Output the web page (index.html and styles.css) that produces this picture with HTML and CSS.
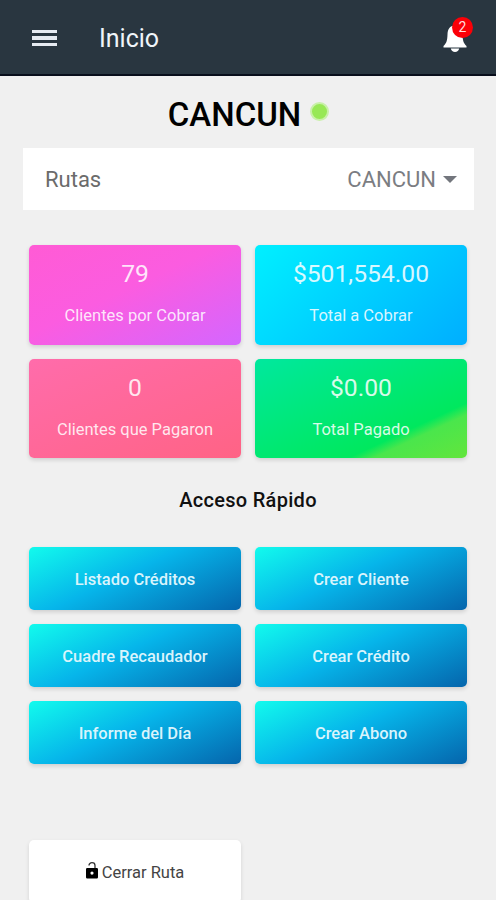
FILE: index.html
```html
<!DOCTYPE html>
<html lang="es">

<head>
    <meta charset="UTF-8">
    <meta name="viewport" content="width=device-width, initial-scale=1.0">
    <title>Inicio</title>
    <link rel="stylesheet" href="styles.css">
</head>

<body>
    <header class="toolbar">
        <div class="menu-btn">
            <span></span>
            <span></span>
            <span></span>
        </div>
        <div class="toolbar-title">Inicio</div>
        <div class="notifications">
            <svg class="bell" viewBox="0 0 24 27">
                <path d="M12 0C6.500 0 4.700 4 4.500 9C4.300 15 3.500 17.500 0.500 20.500V22H23.500V20.500C20.500 17.500 19.700 15 19.500 9C19.300 4 17.500 0 12 0Z" />
                <path d="M7.800 23H16.200C15.700 25.300 14.200 26.500 12 26.500C9.800 26.500 8.300 25.300 7.800 23Z" />
            </svg>
            <span class="badge">2</span>
        </div>
    </header>

    <main class="content">
        <h1 class="city">CANCUN <span class="status"></span></h1>

        <div class="route-select">
            <span>Rutas</span>
            <span class="route-value">CANCUN <i class="arrow"></i></span>
        </div>

        <div class="grid">
            <div class="card pink">
                <div class="amount">79</div>
                <div class="label">Clientes por Cobrar</div>
            </div>
            <div class="card blue">
                <div class="amount">$501,554.00</div>
                <div class="label">Total a Cobrar</div>
            </div>
            <div class="card coral">
                <div class="amount">0</div>
                <div class="label">Clientes que Pagaron</div>
            </div>
            <div class="card green">
                <div class="amount">$0.00</div>
                <div class="label">Total Pagado</div>
            </div>
        </div>

        <h2 class="section-title">Acceso Rápido</h2>

        <div class="grid">
            <button class="action">Listado Créditos</button>
            <button class="action">Crear Cliente</button>
            <button class="action">Cuadre Recaudador</button>
            <button class="action">Crear Crédito</button>
            <button class="action">Informe del Día</button>
            <button class="action">Crear Abono</button>
        </div>

        <div class="grid footer-grid">
            <button class="close-route">
                <svg class="lock" viewBox="0 0 12 17">
                    <path class="shackle" d="M3 3.500A3 2.800 0 0 1 9 3.500V6" />
                    <path fill-rule="evenodd" d="M1.200 6H10.800Q12 6 12 7.200V15.300Q12 16.500 10.800 16.500H1.200Q0 16.500 0 15.300V7.200Q0 6 1.200 6ZM6 9.500A1.600 1.600 0 1 0 6 12.700A1.600 1.600 0 1 0 6 9.500Z" />
                </svg>
                <span>Cerrar Ruta</span>
            </button>
        </div>
    </main>
</body>

</html>
```
FILE: styles.css
```css
* {
    box-sizing: border-box;
}

body {
    font-family: 'Roboto', sans-serif;
    margin: 0;
    height: 900px;
    overflow: hidden;
    background-color: #f0f0f0;
}

/* Toolbar */
.toolbar {
    display: flex;
    align-items: center;
    height: 76px;
    padding: 0 28px 0 32px;
    background-color: #293640;
    border-bottom: 2px solid #080e1b;
    color: #f0f5fa;
}

.menu-btn {
    display: flex;
    flex-direction: column;
    gap: 3px;
    width: 25px;
    margin-top: 2px;
}

.menu-btn span {
    height: 3.500px;
    background-color: #e6ebf2;
}

.toolbar-title {
    flex: 1;
    margin: 2px 0 0 42px;
    font-size: 25px;
}

.notifications {
    position: relative;
    width: 25px;
    height: 28px;
    margin-top: 4px;
}

.bell {
    display: block;
    width: 24px;
    height: 28px;
    fill: #fff;
}

.badge {
    position: absolute;
    top: -8px;
    left: 9px;
    width: 21px;
    height: 21px;
    border-radius: 50%;
    background-color: #fb0007;
    color: #ffdcdc;
    font-size: 14px;
    line-height: 21px;
    text-align: center;
}

/* Content */
.content {
    padding: 0 22px;
}

.city {
    display: flex;
    justify-content: center;
    align-items: center;
    height: 72px;
    margin: 0;
    padding: 4px 0 0 1px;
    font-size: 33px;
    font-weight: 500;
    color: #000;
}

.status {
    width: 19px;
    height: 19px;
    margin: -5px 0 0 9px;
    border: 2px solid #c9f0a9;
    border-radius: 50%;
    background-color: #98e856;
}

.route-select {
    display: flex;
    justify-content: space-between;
    align-items: center;
    height: 62px;
    margin-left: 1px;
    padding: 0 17px 0 22px;
    background-color: #fff;
    font-size: 22px;
    color: #6b6b6b;
}

.route-value {
    display: flex;
    align-items: center;
    color: #7b7d82;
}

.arrow {
    margin-left: 7px;
    border: 7px solid transparent;
    border-top-color: #73767d;
    border-bottom: 0;
}

.grid {
    display: grid;
    grid-template-columns: 1fr 1fr;
    gap: 14px;
    margin: 35px 7px 0;
}

.card {
    height: 99.500px;
    padding-top: 14px;
    border-radius: 5px;
    box-shadow: 0 2px 4px rgba(0, 0, 0, 0.14);
    color: rgba(255, 255, 255, 0.85);
    text-align: center;
}

.pink {
    background: linear-gradient(155deg, #ff5bd5 0%, #fb5ce0 45%, #d466ff 100%);
}

.blue {
    background: linear-gradient(135deg, #00f0ff, #00aeff);
}

.coral {
    background: linear-gradient(155deg, #ff6cab, #ff6385);
}

.green {
    background: linear-gradient(155deg, #00e89e 0%, #00e85e 72%, #4ae64c 78%, #63e53c 100%);
}

.amount {
    font-size: 24.700px;
    line-height: 30px;
}

.label {
    margin-top: 17px;
    font-size: 16.500px;
    line-height: 20px;
}

.section-title {
    margin: 30px 0 0;
    font-size: 20px;
    line-height: 24px;
    font-weight: 500;
    letter-spacing: 0.300px;
    text-align: center;
    color: #111;
}

.action {
    height: 63px;
    padding: 1px 0 0;
    border: none;
    border-radius: 5px;
    background: linear-gradient(155deg, #12fbed 0%, #06b5ea 45%, #0565ac 100%);
    box-shadow: 0 2px 4px rgba(0, 0, 0, 0.14);
    color: #d9f4fc;
    font-family: inherit;
    font-size: 16.500px;
    font-weight: 500;
}

.footer-grid {
    margin-top: 76px;
}

.close-route {
    display: flex;
    justify-content: center;
    align-items: center;
    gap: 4px;
    height: 63px;
    padding: 1px 0 0;
    border: none;
    border-radius: 5px;
    background-color: #fff;
    box-shadow: 0 2px 4px rgba(0, 0, 0, 0.12);
    color: #444;
    font-family: inherit;
    font-size: 16.500px;
}

.lock {
    width: 12px;
    height: 17px;
    margin-top: -4px;
    fill: #000;
}

.lock .shackle {
    fill: none;
    stroke: #333;
    stroke-width: 1.300;
}
```
